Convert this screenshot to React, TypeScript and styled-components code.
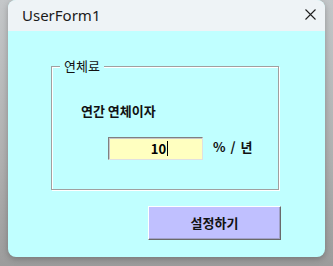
import React from 'react';
import styled, { createGlobalStyle } from 'styled-components';

const GlobalStyle = createGlobalStyle`
  html, body {
    margin: 0;
    padding: 0;
  }
  body {
    width: 333px;
    height: 266px;
    overflow: hidden;
    background: linear-gradient(180deg, #c4c7c9 0%, #b0b0b0 60%, #9c9c9c 100%);
    font-family: "Noto Sans CJK KR", "Noto Sans", sans-serif;
  }
`;

const Screen = styled.div`
  padding: 0 8px 0 8px;
`;

const Window = styled.div`
  width: 317px;
  height: 257px;
  border-radius: 8px;
  overflow: hidden;
  background: #c0ffff;
  display: flex;
  flex-direction: column;
  box-shadow: 0 2px 6px rgba(0, 0, 0, 0.25);
`;

const TitleBar = styled.div`
  height: 31px;
  flex-shrink: 0;
  background: #eef3f6;
  display: flex;
  align-items: center;
  justify-content: space-between;
  padding: 0 9px 0 8px;
`;

const Title = styled.span`
  font-family: "Noto Sans", "Open Sans", sans-serif;
  font-size: 15px;
  color: #1a1a1a;
  margin: -1px 0 0 6px;
`;

const CloseButton = styled.div`
  width: 12px;
  height: 12px;
  display: flex;
  align-items: center;
  justify-content: center;
  margin-top: -2px;
`;

const Body = styled.div`
  flex: 1;
  display: flex;
  flex-direction: column;
`;

const Frame = styled.div`
  position: relative;
  margin: 35px 0 0 43px;
  width: 228px;
  height: 124px;
  box-sizing: border-box;
  border: 1px solid #a0a0a0;
  box-shadow: 1px 1px 0 #ffffff, inset 1px 1px 0 #ffffff;
  padding: 36px 0 0 29px;
`;

const FrameCaption = styled.span`
  position: absolute;
  top: -9px;
  left: 8px;
  padding: 0 4px;
  background: #c0ffff;
  font-size: 13px;
  line-height: 16px;
  color: #111;
`;

const FieldLabel = styled.div`
  font-size: 13px;
  line-height: 16px;
  font-weight: 700;
  color: #111;
`;

const InputRow = styled.div`
  display: flex;
  align-items: center;
  margin: 18px 0 0 27px;
`;

const RateBox = styled.div`
  width: 95px;
  height: 23px;
  box-sizing: border-box;
  background: #ffffc0;
  border: 1px solid;
  border-color: #808080 #e0e0e0 #e0e0e0 #808080;
  box-shadow: inset 1px 1px 0 #c8c8c8;
  display: flex;
  align-items: center;
  justify-content: center;
  padding-left: 8px;
  font-size: 13px;
  font-weight: 700;
  color: #000;
`;

const Caret = styled.span`
  display: inline-block;
  width: 1px;
  height: 15px;
  background: #000;
  margin-left: 1px;
`;

const Unit = styled.span`
  margin-left: 10px;
  margin-top: -4px;
  font-size: 13px;
  font-weight: 700;
  color: #111;
  word-spacing: 2px;
`;

const Footer = styled.div`
  display: flex;
  justify-content: flex-end;
  padding: 16px 44px 0 0;
`;

const ActionButton = styled.button`
  width: 133px;
  height: 34px;
  box-sizing: border-box;
  background: #c0c0ff;
  border: 1px solid;
  border-color: #ffffff #6a6a6a #6a6a6a #ffffff;
  box-shadow: inset -1px -1px 0 #a0a0c8;
  font-family: "Noto Sans CJK KR", "Noto Sans", sans-serif;
  font-size: 13px;
  font-weight: 700;
  color: #111;
  padding: 0 0 2px 0;
  cursor: pointer;
`;

export default function App() {
  return (
    <>
      <GlobalStyle />
      <Screen>
        <Window>
          <TitleBar>
            <Title>UserForm1</Title>
            <CloseButton>
              <svg width="11" height="11" viewBox="0 0 11 11">
                <path d="M0.5 0.5 L10.5 10.5 M10.5 0.5 L0.5 10.5" stroke="#1f1f1f" strokeWidth="1.1" />
              </svg>
            </CloseButton>
          </TitleBar>
          <Body>
            <Frame>
              <FrameCaption>연체료</FrameCaption>
              <FieldLabel>연간 연체이자</FieldLabel>
              <InputRow>
                <RateBox>
                  10<Caret />
                </RateBox>
                <Unit>% / 년</Unit>
              </InputRow>
            </Frame>
            <Footer>
              <ActionButton>설정하기</ActionButton>
            </Footer>
          </Body>
        </Window>
      </Screen>
    </>
  );
}
